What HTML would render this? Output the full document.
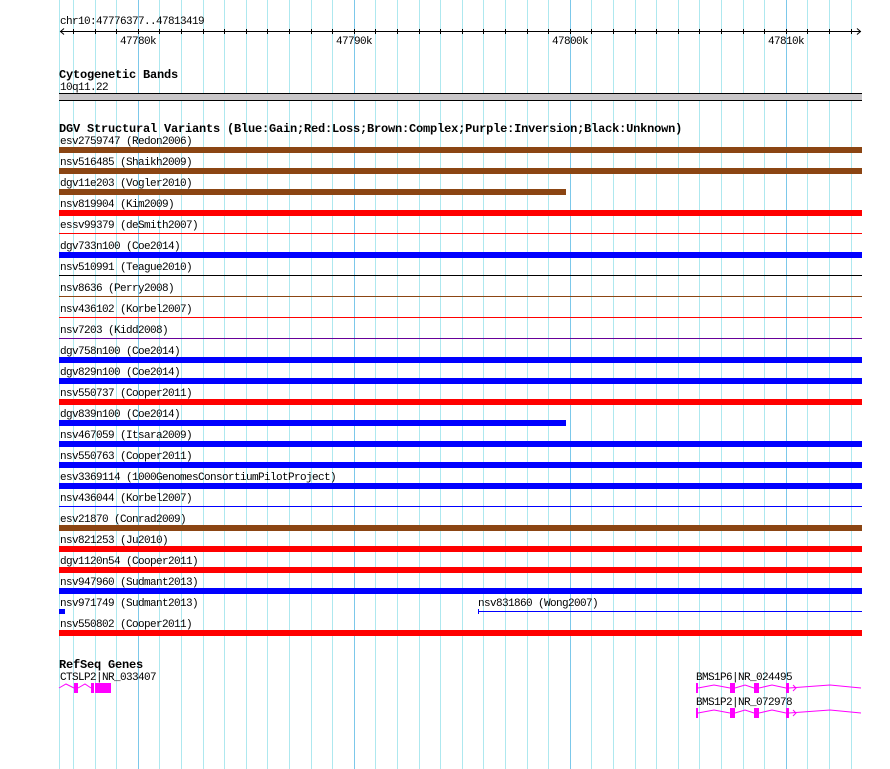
<!DOCTYPE html>
<html><head><meta charset="utf-8"><style>
html,body{margin:0;padding:0;background:#fff;width:890px;height:769px;overflow:hidden}
svg{display:block}
text{font-family:"Liberation Mono",monospace;font-size:11px;letter-spacing:-0.6px;fill:#000}
.b{font-weight:bold;font-size:12px;letter-spacing:-0.2px}
</style></head><body>
<svg width="890" height="769" xmlns="http://www.w3.org/2000/svg" shape-rendering="crispEdges">
<g stroke="#aee8ef" stroke-width="1">
<line x1="59.5" y1="0" x2="59.5" y2="769"/>
<line x1="73.5" y1="0" x2="73.5" y2="769"/><line x1="95.5" y1="0" x2="95.5" y2="769"/><line x1="116.5" y1="0" x2="116.5" y2="769"/>
<line x1="159.5" y1="0" x2="159.5" y2="769"/><line x1="181.5" y1="0" x2="181.5" y2="769"/><line x1="203.5" y1="0" x2="203.5" y2="769"/><line x1="224.5" y1="0" x2="224.5" y2="769"/><line x1="246.5" y1="0" x2="246.5" y2="769"/><line x1="267.5" y1="0" x2="267.5" y2="769"/><line x1="289.5" y1="0" x2="289.5" y2="769"/><line x1="311.5" y1="0" x2="311.5" y2="769"/><line x1="332.5" y1="0" x2="332.5" y2="769"/>
<line x1="375.5" y1="0" x2="375.5" y2="769"/><line x1="397.5" y1="0" x2="397.5" y2="769"/><line x1="419.5" y1="0" x2="419.5" y2="769"/><line x1="440.5" y1="0" x2="440.5" y2="769"/><line x1="462.5" y1="0" x2="462.5" y2="769"/><line x1="483.5" y1="0" x2="483.5" y2="769"/><line x1="505.5" y1="0" x2="505.5" y2="769"/><line x1="527.5" y1="0" x2="527.5" y2="769"/><line x1="548.5" y1="0" x2="548.5" y2="769"/>
<line x1="591.5" y1="0" x2="591.5" y2="769"/><line x1="613.5" y1="0" x2="613.5" y2="769"/><line x1="635.5" y1="0" x2="635.5" y2="769"/><line x1="656.5" y1="0" x2="656.5" y2="769"/><line x1="678.5" y1="0" x2="678.5" y2="769"/><line x1="699.5" y1="0" x2="699.5" y2="769"/><line x1="721.5" y1="0" x2="721.5" y2="769"/><line x1="743.5" y1="0" x2="743.5" y2="769"/><line x1="764.5" y1="0" x2="764.5" y2="769"/>
<line x1="807.5" y1="0" x2="807.5" y2="769"/><line x1="829.5" y1="0" x2="829.5" y2="769"/><line x1="851.5" y1="0" x2="851.5" y2="769"/>
</g>
<g stroke="#7cc8ea"><line x1="138.5" y1="0" x2="138.5" y2="769"/><line x1="354.5" y1="0" x2="354.5" y2="769"/><line x1="570.5" y1="0" x2="570.5" y2="769"/><line x1="786.5" y1="0" x2="786.5" y2="769"/></g>

<text x="60" y="24">chr10:47776377..47813419</text>
<g stroke="#000" fill="none">
<line x1="60" y1="31.5" x2="861" y2="31.5"/>
<path d="M64 28.5 L60.5 31.5 L64 34.5 M857 28.5 L860.5 31.5 L857 34.5" shape-rendering="auto"/>
<path d="M73.5 29v5M95.5 29v5M116.5 29v5M138.5 29v5M159.5 29v5M181.5 29v5M203.5 29v5M224.5 29v5M246.5 29v5M267.5 29v5M289.5 29v5M311.5 29v5M332.5 29v5M354.5 29v5M375.5 29v5M397.5 29v5M419.5 29v5M440.5 29v5M462.5 29v5M483.5 29v5M505.5 29v5M527.5 29v5M548.5 29v5M570.5 29v5M591.5 29v5M613.5 29v5M635.5 29v5M656.5 29v5M678.5 29v5M699.5 29v5M721.5 29v5M743.5 29v5M764.5 29v5M786.5 29v5M807.5 29v5M829.5 29v5M851.5 29v5"/>
</g>
<text x="120" y="44">47780k</text><text x="336" y="44">47790k</text><text x="552" y="44">47800k</text><text x="768" y="44">47810k</text>

<text class="b" x="59" y="78">Cytogenetic Bands</text>
<text x="60" y="90">10q11.22</text>
<rect x="59" y="93" width="803" height="8" fill="#c8c6c8"/>
<rect x="59" y="93" width="803" height="1" fill="#000"/><rect x="59" y="100" width="803" height="1" fill="#000"/>

<text class="b" x="59" y="132">DGV Structural Variants (Blue:Gain;Red:Loss;Brown:Complex;Purple:Inversion;Black:Unknown)</text>

<text x="60" y="144">esv2759747 (Redon2006)</text><rect x="59" y="147" width="803" height="6" fill="#8b4513"/>
<text x="60" y="165">nsv516485 (Shaikh2009)</text><rect x="59" y="168" width="803" height="6" fill="#8b4513"/>
<text x="60" y="186">dgv11e203 (Vogler2010)</text><rect x="59" y="189" width="507" height="6" fill="#8b4513"/>
<text x="60" y="207">nsv819904 (Kim2009)</text><rect x="59" y="210" width="803" height="6" fill="#ff0000"/>
<text x="60" y="228">essv99379 (deSmith2007)</text><rect x="59" y="233" width="803" height="1" fill="#ff0000"/>
<text x="60" y="249">dgv733n100 (Coe2014)</text><rect x="59" y="252" width="803" height="6" fill="#0000ff"/>
<text x="60" y="270">nsv510991 (Teague2010)</text><rect x="59" y="275" width="803" height="1" fill="#000"/>
<text x="60" y="291">nsv8636 (Perry2008)</text><rect x="59" y="296" width="803" height="1" fill="#8b4513"/>
<text x="60" y="312">nsv436102 (Korbel2007)</text><rect x="59" y="317" width="803" height="1" fill="#ff0000"/>
<text x="60" y="333">nsv7203 (Kidd2008)</text><rect x="59" y="338" width="803" height="1" fill="#660099"/>
<text x="60" y="354">dgv758n100 (Coe2014)</text><rect x="59" y="357" width="803" height="6" fill="#0000ff"/>
<text x="60" y="375">dgv829n100 (Coe2014)</text><rect x="59" y="378" width="803" height="6" fill="#0000ff"/>
<text x="60" y="396">nsv550737 (Cooper2011)</text><rect x="59" y="399" width="803" height="6" fill="#ff0000"/>
<text x="60" y="417">dgv839n100 (Coe2014)</text><rect x="59" y="420" width="507" height="6" fill="#0000ff"/>
<text x="60" y="438">nsv467059 (Itsara2009)</text><rect x="59" y="441" width="803" height="6" fill="#0000ff"/>
<text x="60" y="459">nsv550763 (Cooper2011)</text><rect x="59" y="462" width="803" height="6" fill="#0000ff"/>
<text x="60" y="480">esv3369114 (1000GenomesConsortiumPilotProject)</text><rect x="59" y="483" width="803" height="6" fill="#0000ff"/>
<text x="60" y="501">nsv436044 (Korbel2007)</text><rect x="59" y="506" width="803" height="1" fill="#0000ff"/>
<text x="60" y="522">esv21870 (Conrad2009)</text><rect x="59" y="525" width="803" height="6" fill="#8b4513"/>
<text x="60" y="543">nsv821253 (Ju2010)</text><rect x="59" y="546" width="803" height="6" fill="#ff0000"/>
<text x="60" y="564">dgv1120n54 (Cooper2011)</text><rect x="59" y="567" width="803" height="6" fill="#ff0000"/>
<text x="60" y="585">nsv947960 (Sudmant2013)</text><rect x="59" y="588" width="803" height="6" fill="#0000ff"/>
<text x="60" y="606">nsv971749 (Sudmant2013)</text><rect x="59" y="609" width="6" height="5" fill="#0000ff"/>
<text x="478" y="606">nsv831860 (Wong2007)</text><rect x="478" y="611" width="384" height="1" fill="#0000ff"/><rect x="478" y="609" width="1" height="5" fill="#0000ff"/>
<text x="60" y="627">nsv550802 (Cooper2011)</text><rect x="59" y="630" width="803" height="6" fill="#ff0000"/>

<text class="b" x="59" y="668">RefSeq Genes</text>
<text x="60" y="680">CTSLP2|NR_033407</text>
<g fill="#ff00ff" stroke="none"><rect x="74" y="683" width="4" height="10"/><rect x="91" y="683" width="3" height="10"/><rect x="95" y="683" width="16" height="10"/></g>
<path d="M59 688 L66 684 L74 688 M78 688 L85 684 L91 688" stroke="#ff00ff" fill="none" shape-rendering="auto"/>

<text x="696" y="680">BMS1P6|NR_024495</text>
<g fill="#ff00ff"><rect x="696" y="683" width="2" height="10"/><rect x="730" y="683" width="5" height="10"/><rect x="754" y="683" width="5" height="10"/><rect x="786" y="683" width="3" height="10"/></g>
<path d="M698 688 L714 685 L730 688 M735 688 L745 685 L754 688 M759 688 L772 685 L786 688 M789 688 L830 685 L861 688 M793 685 L796 688 L793 691" stroke="#ff00ff" fill="none" shape-rendering="auto"/>
<text x="696" y="705">BMS1P2|NR_072978</text>
<g fill="#ff00ff"><rect x="696" y="708" width="2" height="10"/><rect x="730" y="708" width="5" height="10"/><rect x="754" y="708" width="5" height="10"/><rect x="786" y="708" width="3" height="10"/></g>
<path d="M698 713 L714 710 L730 713 M735 713 L745 710 L754 713 M759 713 L772 710 L786 713 M789 713 L830 710 L861 713 M793 710 L796 713 L793 716" stroke="#ff00ff" fill="none" shape-rendering="auto"/>
</svg>
</body></html>
